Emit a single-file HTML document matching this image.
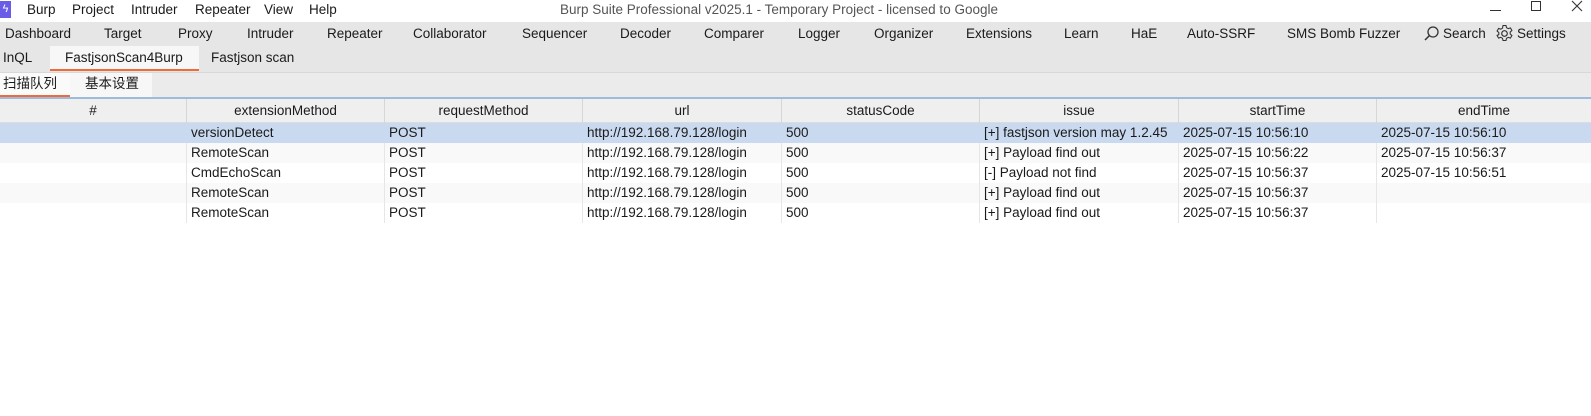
<!DOCTYPE html>
<html><head><meta charset="utf-8"><style>
*{margin:0;padding:0;box-sizing:border-box}
body{width:1591px;height:416px;background:#fff;font-family:"Liberation Sans","Noto Sans CJK SC",sans-serif;font-size:13.5px;color:#1a1a1a;position:relative;overflow:hidden}
.a{position:absolute;white-space:nowrap}
#title{top:0;left:0;width:1591px;height:22px;background:#fff}
#tabs{top:22px;left:0;width:1591px;height:23px;background:#e6e6e6}
#r2{top:45px;left:0;width:1591px;height:27px;background:#e6e6e6}
#r3{top:72px;left:0;width:1591px;height:26px;background:#ebebeb;border-top:1px solid #d8d8d8}
#hdr{top:97px;left:0;width:1591px;height:26px;background:#efefef;border-top:2px solid #9dbbdc;border-bottom:1px solid #dcdcdc}
.h{position:absolute;top:0;height:25px;line-height:24px;text-align:center;border-right:1px solid #d6d6d6}
.row{position:absolute;left:0;width:1591px;height:20px}
.c{position:absolute;top:0;height:20px;line-height:20px;padding-left:4px;border-right:1px solid #e6e6e6}
</style></head><body>
<div id="title" class="a"></div>
<div class="a" style="left:0;top:1px;width:11px;height:17px;background:#6a5ce6;color:#fff;font-size:11px;line-height:17px;text-align:center">ϟ</div>
<div class="a" style="top:0;left:27px;line-height:19px">Burp</div>
<div class="a" style="top:0;left:72px;line-height:19px">Project</div>
<div class="a" style="top:0;left:131px;line-height:19px">Intruder</div>
<div class="a" style="top:0;left:195px;line-height:19px">Repeater</div>
<div class="a" style="top:0;left:264px;line-height:19px">View</div>
<div class="a" style="top:0;left:309px;line-height:19px">Help</div>
<div class="a" style="top:0;left:560px;line-height:19px;color:#555">Burp Suite Professional v2025.1 - Temporary Project - licensed to Google</div>
<div class="a" style="top:10px;left:1490px;width:11px;height:1px;background:#333"></div>
<div class="a" style="top:1px;left:1531px;width:10px;height:10px;border:1px solid #333"></div>
<svg class="a" style="top:0;left:1571px" width="12" height="12" viewBox="0 0 12 12"><path d="M1 1 11 11M11 1 1 11" stroke="#333" stroke-width="1.1"/></svg>

<div id="tabs" class="a"></div>
<div class="a" style="top:22px;line-height:23px;left:5px">Dashboard</div>
<div class="a" style="top:22px;line-height:23px;left:104px">Target</div>
<div class="a" style="top:22px;line-height:23px;left:178px">Proxy</div>
<div class="a" style="top:22px;line-height:23px;left:247px">Intruder</div>
<div class="a" style="top:22px;line-height:23px;left:327px">Repeater</div>
<div class="a" style="top:22px;line-height:23px;left:413px">Collaborator</div>
<div class="a" style="top:22px;line-height:23px;left:522px">Sequencer</div>
<div class="a" style="top:22px;line-height:23px;left:620px">Decoder</div>
<div class="a" style="top:22px;line-height:23px;left:704px">Comparer</div>
<div class="a" style="top:22px;line-height:23px;left:798px">Logger</div>
<div class="a" style="top:22px;line-height:23px;left:874px">Organizer</div>
<div class="a" style="top:22px;line-height:23px;left:966px">Extensions</div>
<div class="a" style="top:22px;line-height:23px;left:1064px">Learn</div>
<div class="a" style="top:22px;line-height:23px;left:1131px">HaE</div>
<div class="a" style="top:22px;line-height:23px;left:1187px">Auto-SSRF</div>
<div class="a" style="top:22px;line-height:23px;left:1287px">SMS Bomb Fuzzer</div>
<svg class="a" style="top:25px;left:1423px" width="17" height="17" viewBox="0 0 17 17"><circle cx="10" cy="7" r="5" fill="none" stroke="#333" stroke-width="1.3"/><path d="M6.5 10.5 2 15" stroke="#333" stroke-width="1.5"/></svg>
<div class="a" style="top:22px;line-height:23px;left:1443px">Search</div>
<svg class="a" style="top:24px;left:1495px" width="19" height="19" viewBox="0 0 19 19"><circle cx="9.5" cy="9.5" r="2.8" fill="none" stroke="#333" stroke-width="1.2"/><path d="M8 1.5h3l.5 2.2 1.8 1 2.1-.8 1.5 2.6-1.7 1.5v2l1.7 1.5-1.5 2.6-2.1-.8-1.8 1-.5 2.2H8l-.5-2.2-1.8-1-2.1.8-1.5-2.6L3.8 10.5v-2L2.1 7l1.5-2.6 2.1.8 1.8-1z" fill="none" stroke="#333" stroke-width="1.1"/></svg>
<div class="a" style="top:22px;line-height:23px;left:1517px">Settings</div>

<div id="r2" class="a"></div>
<div class="a" style="top:46px;left:50px;width:149px;height:25px;background:#f7f7f7;border-bottom:2px solid #f06a3a"></div>
<div class="a" style="top:46px;line-height:24px;left:3px">InQL</div>
<div class="a" style="top:46px;line-height:24px;left:65px">FastjsonScan4Burp</div>
<div class="a" style="top:46px;line-height:24px;left:211px">Fastjson scan</div>

<div id="r3" class="a"></div>
<div class="a" style="top:73px;left:0;width:70px;height:24px;background:#fafafa;border-bottom:2px solid #f06a3a"></div>
<div class="a" style="top:73px;left:70px;width:82px;height:24px;background:#f7f7f7"></div>
<div class="a" style="top:73px;line-height:22px;left:3px">扫描队列</div>
<div class="a" style="top:73px;line-height:22px;left:85px">基本设置</div>

<div id="hdr" class="a">
<div class="h" style="left:0;width:187px">#</div>
<div class="h" style="left:187px;width:198px">extensionMethod</div>
<div class="h" style="left:385px;width:198px">requestMethod</div>
<div class="h" style="left:583px;width:199px">url</div>
<div class="h" style="left:782px;width:198px">statusCode</div>
<div class="h" style="left:980px;width:199px">issue</div>
<div class="h" style="left:1179px;width:198px">startTime</div>
<div class="h" style="left:1377px;width:214px;border-right:none">endTime</div>
</div>

<div class="row" style="top:123px;background:#c9daf0">
<div class="c" style="left:0;width:187px;border:none"></div>
<div class="c" style="left:187px;width:198px;border:none">versionDetect</div>
<div class="c" style="left:385px;width:198px;border:none">POST</div>
<div class="c" style="left:583px;width:199px;border:none">http://192.168.79.128/login</div>
<div class="c" style="left:782px;width:198px;border:none">500</div>
<div class="c" style="left:980px;width:199px;border:none">[+] fastjson version may 1.2.45</div>
<div class="c" style="left:1179px;width:198px;border:none">2025-07-15 10:56:10</div>
<div class="c" style="left:1377px;width:214px;border:none">2025-07-15 10:56:10</div>
</div>
<div class="row" style="top:143px;background:#f9f9f9">
<div class="c" style="left:0;width:187px"></div>
<div class="c" style="left:187px;width:198px">RemoteScan</div>
<div class="c" style="left:385px;width:198px">POST</div>
<div class="c" style="left:583px;width:199px">http://192.168.79.128/login</div>
<div class="c" style="left:782px;width:198px">500</div>
<div class="c" style="left:980px;width:199px">[+] Payload find out</div>
<div class="c" style="left:1179px;width:198px">2025-07-15 10:56:22</div>
<div class="c" style="left:1377px;width:214px;border:none">2025-07-15 10:56:37</div>
</div>
<div class="row" style="top:163px;background:#fff">
<div class="c" style="left:0;width:187px"></div>
<div class="c" style="left:187px;width:198px">CmdEchoScan</div>
<div class="c" style="left:385px;width:198px">POST</div>
<div class="c" style="left:583px;width:199px">http://192.168.79.128/login</div>
<div class="c" style="left:782px;width:198px">500</div>
<div class="c" style="left:980px;width:199px">[-] Payload not find</div>
<div class="c" style="left:1179px;width:198px">2025-07-15 10:56:37</div>
<div class="c" style="left:1377px;width:214px;border:none">2025-07-15 10:56:51</div>
</div>
<div class="row" style="top:183px;background:#f9f9f9">
<div class="c" style="left:0;width:187px"></div>
<div class="c" style="left:187px;width:198px">RemoteScan</div>
<div class="c" style="left:385px;width:198px">POST</div>
<div class="c" style="left:583px;width:199px">http://192.168.79.128/login</div>
<div class="c" style="left:782px;width:198px">500</div>
<div class="c" style="left:980px;width:199px">[+] Payload find out</div>
<div class="c" style="left:1179px;width:198px">2025-07-15 10:56:37</div>
<div class="c" style="left:1377px;width:214px;border:none"></div>
</div>
<div class="row" style="top:203px;background:#fff">
<div class="c" style="left:0;width:187px"></div>
<div class="c" style="left:187px;width:198px">RemoteScan</div>
<div class="c" style="left:385px;width:198px">POST</div>
<div class="c" style="left:583px;width:199px">http://192.168.79.128/login</div>
<div class="c" style="left:782px;width:198px">500</div>
<div class="c" style="left:980px;width:199px">[+] Payload find out</div>
<div class="c" style="left:1179px;width:198px">2025-07-15 10:56:37</div>
<div class="c" style="left:1377px;width:214px;border:none"></div>
</div>
</body></html>
